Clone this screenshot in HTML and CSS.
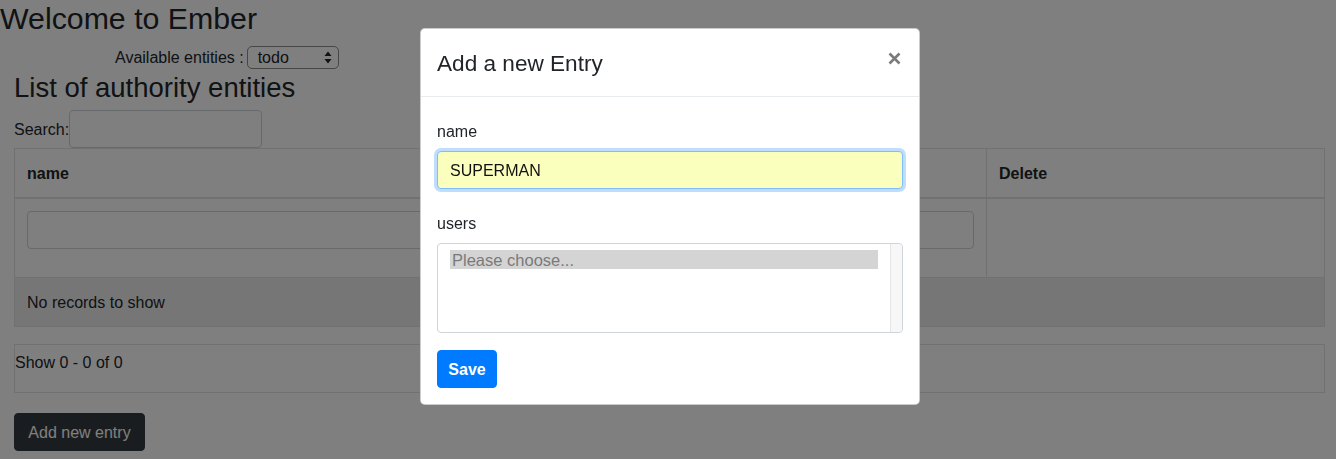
FILE: index.html
```html
<!DOCTYPE html>
<html lang="en">
<head>
<meta charset="utf-8">
<title>Ember</title>
<link rel="stylesheet" href="styles.css">
</head>
<body>
<div class="app">
  <h1 class="app-title">Welcome to Ember</h1>
  <div class="entity-picker">
    <span class="picker-label">Available entities :</span>
    <span class="picker-select">
      <span class="picker-value">todo</span>
      <svg class="picker-arrows" width="8" height="13" viewBox="0 0 8 13"><path d="M4 0.5 L7.5 5 L0.5 5 Z M4 12.5 L7.5 8 L0.5 8 Z" fill="#222"/></svg>
    </span>
  </div>
  <main class="content">
    <h3 class="list-title">List of authority entities</h3>
    <div class="search-row">
      <label class="search-label">Search:</label>
      <span class="search-input"></span>
    </div>
    <table class="grid">
      <colgroup>
        <col class="col-name">
        <col class="col-delete">
      </colgroup>
      <thead>
        <tr><th>name</th><th>Delete</th></tr>
      </thead>
      <tbody>
        <tr class="filter-row">
          <td><div class="form-group-cell"><span class="cell-input"></span></div></td>
          <td></td>
        </tr>
        <tr class="empty-row"><td colspan="2">No records to show</td></tr>
      </tbody>
    </table>
    <div class="pager">Show 0 - 0 of 0</div>
    <button class="btn btn-dark add-btn" type="button">Add new entry</button>
  </main>
</div>

<div class="backdrop"></div>

<div class="modal">
  <div class="modal-header">
    <h4 class="modal-title">Add a new Entry</h4>
    <button class="close" type="button" aria-label="Close">
      <svg width="13" height="13" viewBox="0 0 13 13"><path d="M1.5 1.5 L11.5 11.5 M11.5 1.5 L1.5 11.5" stroke="#7b7b7b" stroke-width="2.6" stroke-linecap="butt"/></svg>
    </button>
  </div>
  <div class="modal-body">
    <div class="form-group">
      <label class="field-label">name</label>
      <div class="text-input focused">SUPERMAN</div>
    </div>
    <div class="form-group">
      <label class="field-label">users</label>
      <div class="multi-select">
        <div class="options">
          <div class="option selected">Please choose...</div>
        </div>
        <div class="track"></div>
      </div>
    </div>
    <button class="btn btn-primary save-btn" type="button">Save</button>
  </div>
</div>
</body>
</html>
```

FILE: styles.css
```css
* { box-sizing: border-box; }

html, body {
  margin: 0;
  padding: 0;
  background: #fff;
}

body {
  font-family: "Liberation Sans", Arial, sans-serif;
  font-size: 16px;
  line-height: 24px;
  color: #212529;
  height: 459px;
  overflow: hidden;
}

.app-title {
  margin: 0;
  padding-top: 1px;
  font-size: 30.3px;
  font-weight: 400;
  line-height: 35px;
  white-space: nowrap;
}

.entity-picker {
  display: flex;
  align-items: center;
  height: 23px;
  margin-top: 10px;
  padding-left: 115px;
}

.picker-label {
  margin-right: 3px;
  white-space: nowrap;
}

.picker-select {
  display: flex;
  align-items: center;
  justify-content: space-between;
  width: 92px;
  height: 23px;
  border: 1px solid #8d8d8d;
  border-radius: 5px;
  padding: 0 6px 0 10px;
  font-size: 16px;
}

.picker-value { line-height: 20px; }

.content {
  padding: 0 11px 0 14px;
}

.list-title {
  margin: 2px 0 5px;
  font-size: 27.5px;
  font-weight: 400;
  line-height: 34px;
  white-space: nowrap;
}

.search-row {
  display: flex;
  align-items: center;
  height: 38px;
}

.search-label { padding-top: 2px; }

.search-input {
  display: block;
  width: 193px;
  height: 38px;
  border: 1px solid #ced4da;
  border-radius: 4px;
  background: #fff;
}

.grid {
  width: 100%;
  border-collapse: collapse;
  table-layout: fixed;
}

.col-name { width: 972px; }

.grid th,
.grid td {
  border: 1px solid #dee2e6;
  padding: 12px;
  text-align: left;
  vertical-align: top;
}

.grid th {
  font-weight: 700;
  border-bottom-width: 2px;
  padding: 13px 12px 11px;
}

.empty-row td {
  background: rgba(0, 0, 0, 0.075);
  padding: 13px 12px 11px;
}

.form-group-cell { margin-bottom: 16px; }

.cell-input {
  display: block;
  height: 38px;
  border: 1px solid #ced4da;
  border-radius: 4px;
  background: #fff;
}

.pager {
  margin-top: 17px;
  height: 49px;
  border: 1px solid #dee2e6;
  padding: 6px 0 0 0;
}

.btn {
  display: inline-block;
  font-family: "Liberation Sans", Arial, sans-serif;
  font-size: 16px;
  line-height: 24px;
  padding: 6px 12px;
  border: 1px solid transparent;
  border-radius: 4px;
  cursor: pointer;
}

.btn-dark {
  background: #343a40;
  border-color: #343a40;
  color: #fff;
}

.add-btn {
  margin-top: 20px;
  width: 131px;
  padding-top: 7px;
  padding-bottom: 5px;
}

.backdrop {
  position: fixed;
  inset: 0;
  background: rgba(0, 0, 0, 0.5);
}

.modal {
  position: absolute;
  top: 28px;
  left: 420px;
  width: 500px;
  background: #fff;
  border: 1px solid rgba(0, 0, 0, 0.2);
  border-radius: 5px;
}

.modal-header {
  display: flex;
  align-items: flex-start;
  padding: 17px 16px 15px;
  border-bottom: 1px solid #e9ecef;
}

.modal-title {
  margin: 0;
  font-size: 22.6px;
  font-weight: 400;
  line-height: 35px;
  color: #212529;
}

.close {
  margin-left: auto;
  margin-top: 6px;
  margin-right: 2px;
  padding: 0;
  border: 0;
  background: transparent;
  display: flex;
}

.modal-body {
  padding: 16px;
}

.form-group { margin-bottom: 16px; }

.field-label {
  display: block;
  padding-top: 7px;
  margin-bottom: 7px;
}

.text-input {
  height: 38px;
  padding: 7px 12px 5px;
  border: 1px solid #80bdff;
  border-radius: 4px;
  background: #faffbd;
  color: #111;
}

.text-input.focused {
  box-shadow: 0 0 0 3px rgba(0, 123, 255, 0.25);
}

.multi-select {
  display: flex;
  height: 90px;
  border: 1px solid #ced4da;
  border-radius: 4px;
  overflow: hidden;
}

.options {
  flex: 1;
  padding: 6px 12px;
}

.option {
  height: 19px;
  line-height: 20px;
  font-size: 16.5px;
  padding-left: 2px;
}

.option.selected {
  background: #d4d4d4;
  color: #7a7a7a;
}

.track {
  width: 12px;
  background: #f7f7f7;
  border-left: 1px solid #e6e6e6;
}

.btn-primary {
  background: #007bff;
  border-color: #007bff;
  color: #fff;
}

.save-btn {
  margin-top: 1px;
  font-weight: 700;
  width: 60px;
  padding: 7px 0 5px;
  text-align: center;
}
```
